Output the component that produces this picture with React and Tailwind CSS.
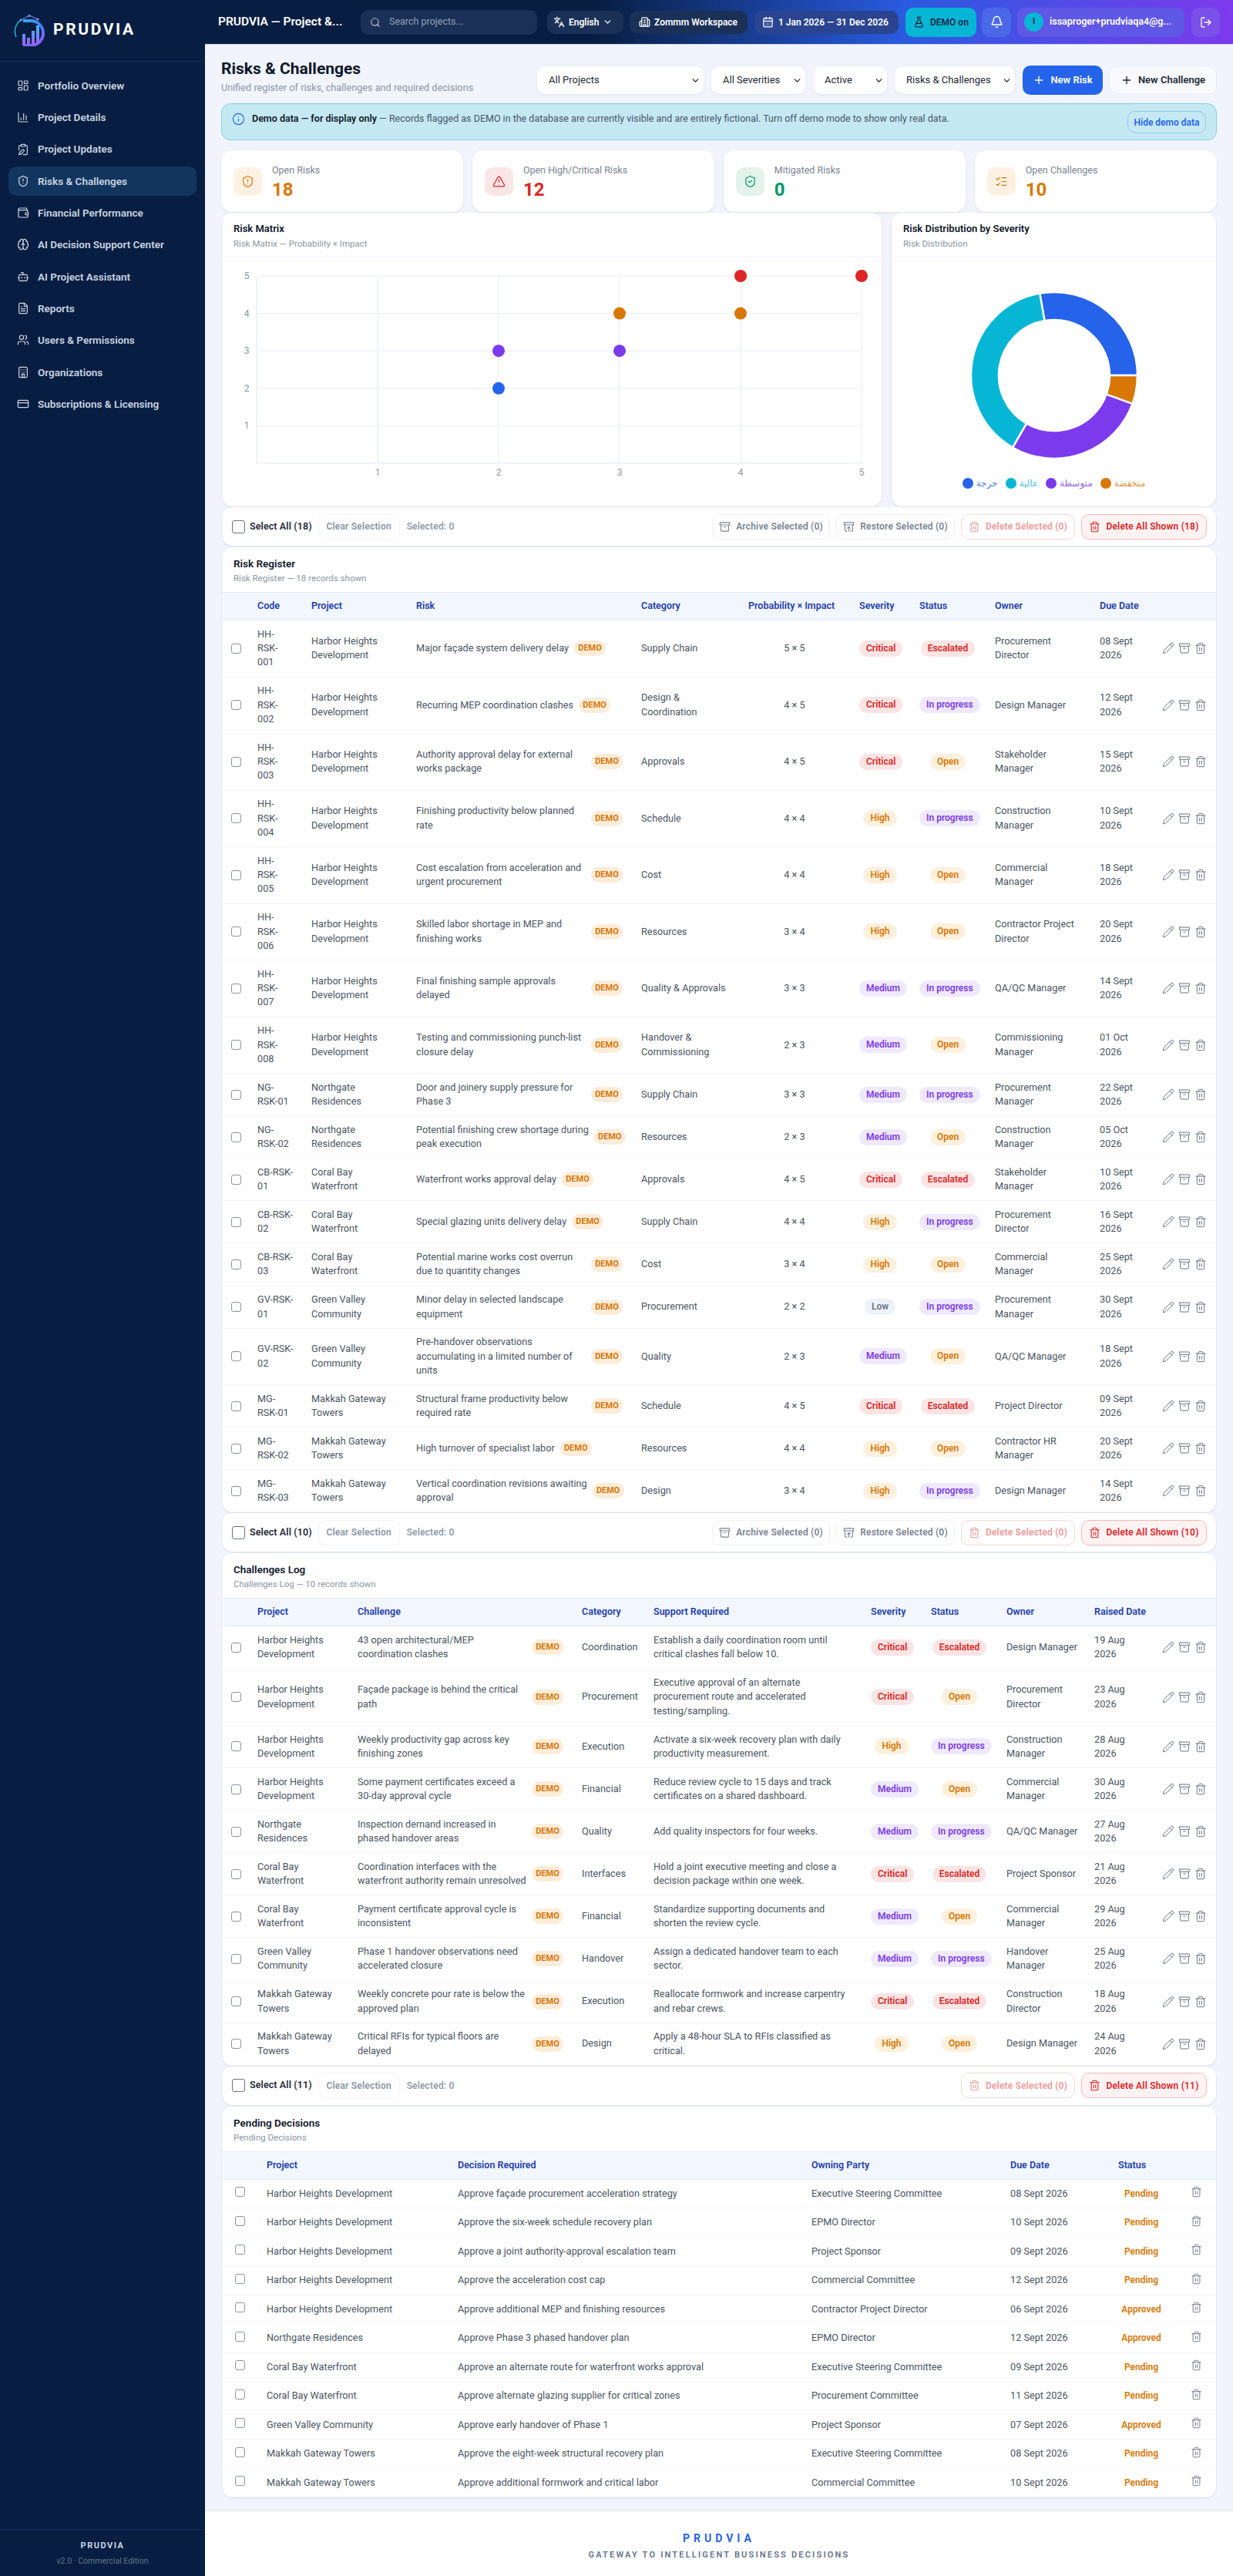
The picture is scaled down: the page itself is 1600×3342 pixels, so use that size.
import {
  Archive, ArchiveRestore, Bell, Bot, Brain, Building2, CalendarDays, ChartColumn, ChevronDown, ClipboardPen, CreditCard,
  FileText, FlaskConical, Hotel, Info, Languages, LayoutDashboard, ListChecks, LogOut, Pencil, Plus, Search, ShieldAlert,
  ShieldCheck, Trash2, TriangleAlert, Users, Wallet,
} from 'lucide-react';

const NAV = [
  ['Portfolio Overview', LayoutDashboard],
  ['Project Details', ChartColumn],
  ['Project Updates', ClipboardPen],
  ['Risks & Challenges', ShieldAlert, true],
  ['Financial Performance', Wallet],
  ['AI Decision Support Center', Brain],
  ['AI Project Assistant', Bot],
  ['Reports', FileText],
  ['Users & Permissions', Users],
  ['Organizations', Hotel],
  ['Subscriptions & Licensing', CreditCard],
];

const KPIS = [
  ['Open Risks', '18', ShieldAlert, 'bg-[#fdf1e3] text-[#d97706]', 'text-[#d97706]'],
  ['Open High/Critical Risks', '12', TriangleAlert, 'bg-[#fbe6e6] text-[#dc2626]', 'text-[#dc2626]'],
  ['Mitigated Risks', '0', ShieldCheck, 'bg-[#e3f3ec] text-[#059669]', 'text-[#059669]'],
  ['Open Challenges', '10', ListChecks, 'bg-[#fdf1e3] text-[#d97706]', 'text-[#d97706]'],
];

const HH = 'Harbor Heights\nDevelopment';
const NG = 'Northgate\nResidences';
const CB = 'Coral Bay\nWaterfront';
const GV = 'Green Valley\nCommunity';
const MG = 'Makkah Gateway\nTowers';

const RISKS = [
  ['HH-\nRSK-\n001', HH, 'Major façade system delivery delay', 'Supply Chain', '5 × 5', 'Critical', 'Escalated', 'Procurement\nDirector', '08 Sept\n2026'],
  ['HH-\nRSK-\n002', HH, 'Recurring MEP coordination clashes', 'Design &\nCoordination', '4 × 5', 'Critical', 'In progress', 'Design Manager', '12 Sept\n2026'],
  ['HH-\nRSK-\n003', HH, 'Authority approval delay for external\nworks package', 'Approvals', '4 × 5', 'Critical', 'Open', 'Stakeholder\nManager', '15 Sept\n2026'],
  ['HH-\nRSK-\n004', HH, 'Finishing productivity below planned\nrate', 'Schedule', '4 × 4', 'High', 'In progress', 'Construction\nManager', '10 Sept\n2026'],
  ['HH-\nRSK-\n005', HH, 'Cost escalation from acceleration and\nurgent procurement', 'Cost', '4 × 4', 'High', 'Open', 'Commercial\nManager', '18 Sept\n2026'],
  ['HH-\nRSK-\n006', HH, 'Skilled labor shortage in MEP and\nfinishing works', 'Resources', '3 × 4', 'High', 'Open', 'Contractor Project\nDirector', '20 Sept\n2026'],
  ['HH-\nRSK-\n007', HH, 'Final finishing sample approvals\ndelayed', 'Quality & Approvals', '3 × 3', 'Medium', 'In progress', 'QA/QC Manager', '14 Sept\n2026'],
  ['HH-\nRSK-\n008', HH, 'Testing and commissioning punch-list\nclosure delay', 'Handover &\nCommissioning', '2 × 3', 'Medium', 'Open', 'Commissioning\nManager', '01 Oct\n2026'],
  ['NG-\nRSK-01', NG, 'Door and joinery supply pressure for\nPhase 3', 'Supply Chain', '3 × 3', 'Medium', 'In progress', 'Procurement\nManager', '22 Sept\n2026'],
  ['NG-\nRSK-02', NG, 'Potential finishing crew shortage during\npeak execution', 'Resources', '2 × 3', 'Medium', 'Open', 'Construction\nManager', '05 Oct\n2026'],
  ['CB-RSK-\n01', CB, 'Waterfront works approval delay', 'Approvals', '4 × 5', 'Critical', 'Escalated', 'Stakeholder\nManager', '10 Sept\n2026'],
  ['CB-RSK-\n02', CB, 'Special glazing units delivery delay', 'Supply Chain', '4 × 4', 'High', 'In progress', 'Procurement\nDirector', '16 Sept\n2026'],
  ['CB-RSK-\n03', CB, 'Potential marine works cost overrun\ndue to quantity changes', 'Cost', '3 × 4', 'High', 'Open', 'Commercial\nManager', '25 Sept\n2026'],
  ['GV-RSK-\n01', GV, 'Minor delay in selected landscape\nequipment', 'Procurement', '2 × 2', 'Low', 'In progress', 'Procurement\nManager', '30 Sept\n2026'],
  ['GV-RSK-\n02', GV, 'Pre-handover observations\naccumulating in a limited number of\nunits', 'Quality', '2 × 3', 'Medium', 'Open', 'QA/QC Manager', '18 Sept\n2026'],
  ['MG-\nRSK-01', MG, 'Structural frame productivity below\nrequired rate', 'Schedule', '4 × 5', 'Critical', 'Escalated', 'Project Director', '09 Sept\n2026'],
  ['MG-\nRSK-02', MG, 'High turnover of specialist labor', 'Resources', '4 × 4', 'High', 'Open', 'Contractor HR\nManager', '20 Sept\n2026'],
  ['MG-\nRSK-03', MG, 'Vertical coordination revisions awaiting\napproval', 'Design', '3 × 4', 'High', 'In progress', 'Design Manager', '14 Sept\n2026'],
];

const CHALLENGES = [
  [HH, '43 open architectural/MEP\ncoordination clashes', 'Coordination', 'Establish a daily coordination room until\ncritical clashes fall below 10.', 'Critical', 'Escalated', 'Design Manager', '19 Aug\n2026'],
  [HH, 'Façade package is behind the critical\npath', 'Procurement', 'Executive approval of an alternate\nprocurement route and accelerated\ntesting/sampling.', 'Critical', 'Open', 'Procurement\nDirector', '23 Aug\n2026'],
  [HH, 'Weekly productivity gap across key\nfinishing zones', 'Execution', 'Activate a six-week recovery plan with daily\nproductivity measurement.', 'High', 'In progress', 'Construction\nManager', '28 Aug\n2026'],
  [HH, 'Some payment certificates exceed a\n30-day approval cycle', 'Financial', 'Reduce review cycle to 15 days and track\ncertificates on a shared dashboard.', 'Medium', 'Open', 'Commercial\nManager', '30 Aug\n2026'],
  [NG, 'Inspection demand increased in\nphased handover areas', 'Quality', 'Add quality inspectors for four weeks.', 'Medium', 'In progress', 'QA/QC Manager', '27 Aug\n2026'],
  [CB, 'Coordination interfaces with the\nwaterfront authority remain unresolved', 'Interfaces', 'Hold a joint executive meeting and close a\ndecision package within one week.', 'Critical', 'Escalated', 'Project Sponsor', '21 Aug\n2026'],
  [CB, 'Payment certificate approval cycle is\ninconsistent', 'Financial', 'Standardize supporting documents and\nshorten the review cycle.', 'Medium', 'Open', 'Commercial\nManager', '29 Aug\n2026'],
  [GV, 'Phase 1 handover observations need\naccelerated closure', 'Handover', 'Assign a dedicated handover team to each\nsector.', 'Medium', 'In progress', 'Handover\nManager', '25 Aug\n2026'],
  [MG, 'Weekly concrete pour rate is below the\napproved plan', 'Execution', 'Reallocate formwork and increase carpentry\nand rebar crews.', 'Critical', 'Escalated', 'Construction\nDirector', '18 Aug\n2026'],
  [MG, 'Critical RFIs for typical floors are\ndelayed', 'Design', 'Apply a 48-hour SLA to RFIs classified as\ncritical.', 'High', 'Open', 'Design Manager', '24 Aug\n2026'],
];

const DECISIONS = [
  ['Harbor Heights Development', 'Approve façade procurement acceleration strategy', 'Executive Steering Committee', '08 Sept 2026', 'Pending'],
  ['Harbor Heights Development', 'Approve the six-week schedule recovery plan', 'EPMO Director', '10 Sept 2026', 'Pending'],
  ['Harbor Heights Development', 'Approve a joint authority-approval escalation team', 'Project Sponsor', '09 Sept 2026', 'Pending'],
  ['Harbor Heights Development', 'Approve the acceleration cost cap', 'Commercial Committee', '12 Sept 2026', 'Pending'],
  ['Harbor Heights Development', 'Approve additional MEP and finishing resources', 'Contractor Project Director', '06 Sept 2026', 'Approved'],
  ['Northgate Residences', 'Approve Phase 3 phased handover plan', 'EPMO Director', '12 Sept 2026', 'Approved'],
  ['Coral Bay Waterfront', 'Approve an alternate route for waterfront works approval', 'Executive Steering Committee', '09 Sept 2026', 'Pending'],
  ['Coral Bay Waterfront', 'Approve alternate glazing supplier for critical zones', 'Procurement Committee', '11 Sept 2026', 'Pending'],
  ['Green Valley Community', 'Approve early handover of Phase 1', 'Project Sponsor', '07 Sept 2026', 'Approved'],
  ['Makkah Gateway Towers', 'Approve the eight-week structural recovery plan', 'Executive Steering Committee', '08 Sept 2026', 'Pending'],
  ['Makkah Gateway Towers', 'Approve additional formwork and critical labor', 'Commercial Committee', '10 Sept 2026', 'Pending'],
];

const BADGE = {
  Critical: 'bg-[#fbe4e4] text-[#dc2626]',
  Escalated: 'bg-[#fbe4e4] text-[#dc2626]',
  High: 'bg-[#fdf0dd] text-[#d97706]',
  Open: 'bg-[#fdf0dd] text-[#d97706]',
  Medium: 'bg-[#efe9fd] text-[#7c3aed]',
  'In progress': 'bg-[#efe9fd] text-[#7c3aed]',
  Low: 'bg-[#eef2f8] text-[#64748b]',
};

function Logo() {
  return (
    <svg width="44" height="42" viewBox="0 0 44 42" fill="none">
      <defs>
        <linearGradient id="logoRing" x1="0" y1="0" x2="44" y2="42" gradientUnits="userSpaceOnUse">
          <stop stopColor="#22d3ee" />
          <stop offset="0.55" stopColor="#3b82f6" />
          <stop offset="1" stopColor="#a855f7" />
        </linearGradient>
        <linearGradient id="logoBars" x1="0" y1="10" x2="0" y2="42" gradientUnits="userSpaceOnUse">
          <stop stopColor="#22d3ee" />
          <stop offset="1" stopColor="#a855f7" />
        </linearGradient>
      </defs>
      <path d="M12 9h10a16 16 0 0 1 0 32H12" stroke="url(#logoRing)" strokeWidth="4" />
      <path d="M9 8a18 18 0 0 0-6 22" stroke="#22d3ee" strokeWidth="1.2" />
      <path d="M9 8 20 2l11 5" stroke="#7c9cf5" strokeWidth="1" />
      <circle cx="9" cy="8" r="1.6" fill="#7c9cf5" />
      <circle cx="20" cy="2.5" r="1.6" fill="#a78bfa" />
      <circle cx="31" cy="7" r="1.6" fill="#a78bfa" />
      <rect x="11" y="26" width="4" height="15" fill="url(#logoBars)" />
      <rect x="17" y="31" width="4" height="10" fill="url(#logoBars)" />
      <rect x="23" y="22" width="4" height="19" fill="url(#logoBars)" />
      <rect x="29" y="15" width="4" height="24" fill="url(#logoBars)" />
    </svg>
  );
}

function Sidebar() {
  return (
    <aside className="w-[266px] shrink-0 bg-[#071e42] flex flex-col">
      <div className="h-[80px] flex items-center gap-[7px] pl-[18px] pb-[2px] border-b border-[#14315c]">
        <Logo />
        <span className="text-[21px] font-bold tracking-[2.6px] text-white leading-none">PRUDVIA</span>
      </div>
      <nav className="flex-1 px-[11px] pt-[12px] flex flex-col gap-[3.3px]">
        {NAV.map(([label, Icon, active]) => (
          <div key={label} className={`h-[38px] rounded-[10px] flex items-center gap-[11px] pl-[11px] text-[13.5px] font-semibold text-[#cbd5e1] ${active ? 'bg-[#12355f]' : ''}`}>
            <Icon size={16} strokeWidth={1.8} className="shrink-0" />
            {label}
          </div>
        ))}
      </nav>
      <div className="h-[61px] border-t border-[#14315c] flex flex-col items-center pt-[13px]">
        <div className="text-[11px] font-bold tracking-[1.5px] text-[#cbd5e1] leading-[16px]">PRUDVIA</div>
        <div className="text-[10.5px] text-[#64748b] leading-[16px] mt-[4px]">v2.0 · Commercial Edition</div>
      </div>
    </aside>
  );
}

function Topbar() {
  return (
    <header className="h-[58px] shrink-0 flex items-center pl-[17px] pr-[17px] bg-[linear-gradient(90deg,#071e42_38%,#2a5be0_68%,#7c3aed_100%)] border-b border-[#cbd5e1] text-white">
      <div className="w-[185px] text-[15.5px] font-semibold whitespace-nowrap">PRUDVIA — Project &amp;...</div>
      <div className="w-[229px] h-[32px] rounded-[10px] bg-[#1a3057] flex items-center gap-[11px] pl-[12px] text-[12.5px] text-[#94a3b8]">
        <Search size={14} className="text-[#b6c2d4]" />
        Search projects...
      </div>
      <div className="ml-[13px] w-[99px] h-[30px] rounded-[10px] bg-[#1a3057] flex items-center pl-[8px] gap-[5px] text-[12px] font-semibold">
        <Languages size={15} />
        English
        <ChevronDown size={13} strokeWidth={2.5} />
      </div>
      <div className="ml-[8px] w-[153px] h-[30px] rounded-[10px] bg-[#1a3057] flex items-center pl-[12px] gap-[5px] text-[12px] font-semibold whitespace-nowrap">
        <Building2 size={15} />
        Zommm Workspace
      </div>
      <div className="ml-[9px] w-[187px] h-[30px] rounded-[10px] bg-[#2a4491] flex items-center pl-[10px] gap-[6px] text-[12px] font-semibold whitespace-nowrap">
        <CalendarDays size={15} />
        1 Jan 2026 — 31 Dec 2026
      </div>
      <div className="ml-[9px] w-[92px] h-[38px] rounded-[10px] bg-[#06b6d4] flex items-center pl-[10px] gap-[7px] text-[12px] font-semibold text-[#0f2747]">
        <FlaskConical size={15} />
        DEMO on
      </div>
      <div className="ml-[7px] w-[38px] h-[38px] rounded-[10px] bg-[#4a68e8] flex items-center justify-center">
        <Bell size={17} />
      </div>
      <div className="ml-[8px] w-[217px] h-[38px] rounded-[10px] bg-[#5f57e6] flex items-center pl-[9px] gap-[8px] text-[12.5px] font-semibold whitespace-nowrap">
        <span className="w-[25px] h-[25px] rounded-full bg-[#06b6d4] text-[#0f2747] text-[11px] font-bold flex items-center justify-center">I</span>
        issaproger+prudviaqa4@g...
      </div>
      <div className="ml-[9px] w-[37px] h-[38px] rounded-[10px] bg-[#7a50e8] flex items-center justify-center">
        <LogOut size={16} />
      </div>
    </header>
  );
}

function FilterSelect({ label, width }) {
  return (
    <div className={`${width} h-[36px] rounded-[10px] bg-white shadow-[0_1px_3px_rgba(15,23,42,0.08)] flex items-center justify-between pl-[15px] pr-[4px] text-[13px] text-[#1f2937]`}>
      {label}
      <ChevronDown size={13} strokeWidth={2.5} className="text-[#1f2937]" />
    </div>
  );
}

function ChartCardHead({ title, sub }) {
  return (
    <div className="h-[58px] border-b border-[#eef1f6] px-[15px] pt-[12px]">
      <div className="text-[13px] font-semibold text-[#0f172a] leading-[18px]">{title}</div>
      <div className="text-[11.5px] text-[#8b95a3] leading-[18px] mt-px">{sub}</div>
    </div>
  );
}

const MATRIX_DOTS = [
  [4, 5, '#dc2626'], [5, 5, '#dc2626'], [3, 4, '#d97706'], [4, 4, '#d97706'], [2, 3, '#7c3aed'], [3, 3, '#7c3aed'], [2, 2, '#2563eb'],
];

function RiskMatrix() {
  const px = (v) => 45 + v * 157;
  const py = (v) => 267 - v * 48.6;
  const ticks = [1, 2, 3, 4, 5];
  return (
    <svg width="856" height="322" className="block">
      <line x1="45" x2="45" y1={py(5)} y2={py(0)} stroke="#e2e8f0" />
      <line x1="45" x2={px(5)} y1={py(0)} y2={py(0)} stroke="#e2e8f0" />
      {ticks.map((t) => (
        <g key={t}>
          <line x1="45" x2={px(5)} y1={py(t)} y2={py(t)} stroke="#e9edf3" />
          <line x1={px(t)} x2={px(t)} y1={py(5)} y2={py(0)} stroke="#e9edf3" />
          <text x={px(t)} y={py(0) + 16} textAnchor="middle" fontSize="12" fill="#8b95a3">{t}</text>
          <text x="32" y={py(t) + 4} textAnchor="middle" fontSize="12" fill="#8b95a3">{t}</text>
        </g>
      ))}
      {MATRIX_DOTS.map(([x, y, c]) => <circle key={`${x}-${y}`} cx={px(x)} cy={py(y)} r="8" fill={c} />)}
    </svg>
  );
}

function arc(from, to) {
  const c = 108;
  const pt = (r, a) => {
    const t = ((a - 90) * Math.PI) / 180;
    return `${(c + r * Math.cos(t)).toFixed(2)} ${(c + r * Math.sin(t)).toFixed(2)}`;
  };
  const large = to - from > 180 ? 1 : 0;
  return `M${pt(108, from)}A108 108 0 ${large} 1 ${pt(108, to)}L${pt(72, to)}A72 72 0 ${large} 0 ${pt(72, from)}Z`;
}

function Donut() {
  const parts = [[-10, 90, '#2563eb'], [90, 110, '#d97706'], [110, 210, '#7c3aed'], [210, 350, '#06b6d4']];
  return (
    <svg width="216" height="216" viewBox="0 0 216 216" className="block">
      {parts.map(([a, b, c]) => <path key={c} d={arc(a, b)} fill={c} stroke="#fff" strokeWidth="2.5" />)}
    </svg>
  );
}

function ToolButton({ icon: Icon, label, width, tone }) {
  const tones = {
    plain: 'border-[#eef1f6] text-[#7b8494]',
    soft: 'border-[#f8d7d7] text-[#ee9a9a]',
    danger: 'border-[#f5b8b8] bg-[#fef2f2] text-[#dc2626]',
  };
  return (
    <div className={`${width} ${tones[tone]} h-[33px] rounded-[10px] border flex items-center justify-center gap-[7px] text-[12px] font-semibold whitespace-nowrap tracking-[0.2px]`}>
      <Icon size={15} strokeWidth={1.8} />
      {label}
    </div>
  );
}

function Toolbar({ count, archive = true, className = '' }) {
  return (
    <div className={`h-[50px] bg-white rounded-[14px] shadow-[0_1px_3px_rgba(15,23,42,0.1)] flex items-center pl-[13px] pr-[12px] ${className}`}>
      <span className="w-[17px] h-[17px] rounded-[3px] border border-[#6b7280] bg-white" />
      <span className="ml-[6px] text-[12.5px] font-semibold text-[#1f2937] whitespace-nowrap tracking-[0.1px]">Select All ({count})</span>
      <span className="ml-[8px] w-[106px] h-[33px] rounded-[10px] border border-[#f1f4f8] flex items-center justify-center text-[12px] font-semibold text-[#8b95a3] tracking-[0.2px]">Clear Selection</span>
      <span className="ml-[9px] text-[12px] font-medium text-[#8b95a3] tracking-[0.2px]">Selected: 0</span>
      <div className="ml-auto flex items-center gap-[8px]">
        {archive && <ToolButton icon={Archive} label="Archive Selected (0)" width="w-[153px]" tone="plain" />}
        {archive && <ToolButton icon={ArchiveRestore} label="Restore Selected (0)" width="w-[154px]" tone="plain" />}
        <ToolButton icon={Trash2} label="Delete Selected (0)" width="w-[148px]" tone="soft" />
        <ToolButton icon={Trash2} label={`Delete All Shown (${count})`} width="w-[163px]" tone="danger" />
      </div>
    </div>
  );
}

function CardHead({ title, sub }) {
  return (
    <div className="h-[58px] px-[15px] pt-[12px]">
      <div className="text-[13.5px] font-semibold text-[#0f172a] leading-[18px]">{title}</div>
      <div className="text-[11.5px] text-[#8b95a3] leading-[18px] mt-px">{sub}</div>
    </div>
  );
}

function Th({ children, className = '' }) {
  return <th className={`h-[36px] px-[12px] text-left text-[12.5px] font-semibold text-[#1e40af] bg-[#f2f6fe] border-y border-[#e6ebf3] ${className}`}>{children}</th>;
}

function Td({ children, className = '' }) {
  return <td className={`px-[12px] py-[8.65px] text-[12.7px] leading-[18.4px] text-[#4b5563] whitespace-pre align-middle border-b border-[#f2f4f8] ${className}`}>{children}</td>;
}

function Check({ className = '' }) {
  return <span className={`block w-[13px] h-[13px] rounded-[3px] border border-[#8b95a3] bg-white ${className}`} />;
}

function Pill({ label }) {
  return <span className={`${BADGE[label]} inline-block px-[9px] rounded-full text-[12px] font-semibold leading-[21px] whitespace-nowrap`}>{label}</span>;
}

function DemoTag() {
  return <span className="inline-block w-[41px] text-center rounded-full bg-[#fdecd9] text-[#d97706] text-[11px] font-bold leading-[20px] shrink-0">DEMO</span>;
}

function Actions() {
  return (
    <div className="flex items-center justify-end gap-[5px] text-[#6b7280]">
      <Pencil size={16} strokeWidth={1.5} className="shrink-0" />
      <Archive size={16} strokeWidth={1.5} className="shrink-0" />
      <Trash2 size={16} strokeWidth={1.5} className="shrink-0" />
    </div>
  );
}

function RiskTable() {
  return (
    <table className="w-full table-fixed border-collapse">
      <colgroup>
        <col className="w-[34px]" /><col className="w-[70px]" /><col className="w-[136px]" /><col className="w-[292px]" />
        <col className="w-[139px]" /><col className="w-[144px]" /><col className="w-[78px]" /><col className="w-[98px]" />
        <col className="w-[136px]" /><col className="w-[85px]" /><col className="w-[78px]" />
      </colgroup>
      <thead>
        <tr>
          <Th /><Th>Code</Th><Th>Project</Th><Th>Risk</Th><Th>Category</Th>
          <Th className="text-center">Probability × Impact</Th><Th className="text-center">Severity</Th><Th className="text-center">Status</Th>
          <Th>Owner</Th><Th>Due Date</Th><Th />
        </tr>
      </thead>
      <tbody>
        {RISKS.map(([code, project, risk, category, score, severity, status, owner, due]) => (
          <tr key={code}>
            <Td><Check /></Td>
            <Td>{code}</Td>
            <Td>{project}</Td>
            <Td>
              <div className="flex items-center gap-[7px]">
                <span className={risk.includes('\n') ? 'w-[232px]' : ''}>{risk}</span>
                <DemoTag />
              </div>
            </Td>
            <Td>{category}</Td>
            <Td className="text-center">{score}</Td>
            <Td className="text-center"><Pill label={severity} /></Td>
            <Td className="text-center"><Pill label={status} /></Td>
            <Td>{owner}</Td>
            <Td>{due}</Td>
            <Td><Actions /></Td>
          </tr>
        ))}
      </tbody>
    </table>
  );
}

function ChallengeTable() {
  return (
    <table className="w-full table-fixed border-collapse">
      <colgroup>
        <col className="w-[34px]" /><col className="w-[130px]" /><col className="w-[291px]" /><col className="w-[93px]" />
        <col className="w-[282px]" /><col className="w-[78px]" /><col className="w-[98px]" /><col className="w-[114px]" />
        <col className="w-[92px]" /><col className="w-[78px]" />
      </colgroup>
      <thead>
        <tr>
          <Th /><Th>Project</Th><Th>Challenge</Th><Th>Category</Th><Th>Support Required</Th>
          <Th className="text-center">Severity</Th><Th className="text-center">Status</Th><Th>Owner</Th><Th>Raised Date</Th><Th />
        </tr>
      </thead>
      <tbody>
        {CHALLENGES.map(([project, challenge, category, support, severity, status, owner, raised]) => (
          <tr key={challenge}>
            <Td><Check /></Td>
            <Td>{project}</Td>
            <Td>
              <div className="flex items-center justify-between">
                <span>{challenge}</span>
                <DemoTag />
              </div>
            </Td>
            <Td>{category}</Td>
            <Td>{support}</Td>
            <Td className="text-center"><Pill label={severity} /></Td>
            <Td className="text-center"><Pill label={status} /></Td>
            <Td>{owner}</Td>
            <Td>{raised}</Td>
            <Td><Actions /></Td>
          </tr>
        ))}
      </tbody>
    </table>
  );
}

function DecisionTable() {
  return (
    <table className="w-full table-fixed border-collapse">
      <colgroup>
        <col className="w-[46px]" /><col className="w-[248px]" /><col className="w-[459px]" /><col className="w-[258px]" />
        <col className="w-[140px]" /><col className="w-[84px]" /><col className="w-[55px]" />
      </colgroup>
      <thead>
        <tr>
          <Th /><Th>Project</Th><Th>Decision Required</Th><Th>Owning Party</Th><Th>Due Date</Th><Th className="text-center">Status</Th><Th />
        </tr>
      </thead>
      <tbody>
        {DECISIONS.map(([project, decision, party, due, status]) => (
          <tr key={decision} className="h-[37.5px]">
            <Td><Check className="ml-[5px] -mt-[4px]" /></Td>
            <Td>{project}</Td>
            <Td>{decision}</Td>
            <Td>{party}</Td>
            <Td>{due}</Td>
            <Td className="text-center"><span className="text-[12px] font-semibold text-[#d97706]">{status}</span></Td>
            <Td>
              <Trash2 size={15} strokeWidth={1.5} className="ml-[10px] -mt-[4px] text-[#6b7280]" />
            </Td>
          </tr>
        ))}
      </tbody>
    </table>
  );
}

function Card({ children, className = '' }) {
  return <section className={`bg-white rounded-[14px] shadow-[0_1px_3px_rgba(15,23,42,0.1)] overflow-hidden ${className}`}>{children}</section>;
}

export default function App() {
  return (
    <div className="flex min-h-[3342px] w-[1600px] font-['Roboto','Noto_Sans',sans-serif]">
      <Sidebar />
      <div className="flex-1 min-w-0 flex flex-col">
        <Topbar />
        <main className="flex-1 bg-[#f1f4fc] px-[21px] pt-[27px] pb-[15px]">
          <div className="flex items-start justify-between h-[36px]">
            <div>
              <h1 className="text-[21px] font-bold text-[#0f172a] leading-[26px] -mt-[9px]">Risks &amp; Challenges</h1>
              <p className="text-[12.7px] text-[#8b95a3] leading-[18px] mt-[3px]">Unified register of risks, challenges and required decisions</p>
            </div>
            <div className="flex items-center gap-[10px]">
              <FilterSelect label="All Projects" width="w-[216px]" />
              <FilterSelect label="All Severities" width="w-[122px]" />
              <FilterSelect label="Active" width="w-[96px]" />
              <FilterSelect label="Risks & Challenges" width="w-[156px]" />
              <div className="w-[104px] h-[38px] rounded-[10px] bg-[#2563eb] text-white text-[13px] font-semibold flex items-center justify-center gap-[7px]">
                <Plus size={16} />New Risk
              </div>
              <div className="w-[140px] h-[36px] -ml-[2px] rounded-[10px] bg-[#f8fafd] border border-[#e9edf3] text-[#1f2937] text-[13px] font-semibold flex items-center justify-center gap-[7px]">
                <Plus size={16} />New Challenge
              </div>
            </div>
          </div>

          <div className="mt-[13px] h-[48px] rounded-[12px] bg-[#c5e9f3] border border-[#7fd3e6] flex pl-[13px] pr-[13px] pt-[9px]">
            <Info size={17} strokeWidth={1.6} className="text-[#2563eb] mt-[2px]" />
            <p className="ml-[9px] text-[12.5px] leading-[20px] text-[#475569]">
              <b className="font-semibold text-[#0f172a]">Demo data — for display only</b> — Records flagged as DEMO in the database are currently visible and are entirely fictional. Turn off demo mode to show only real data.
            </p>
            <div className="ml-auto w-[102px] h-[29px] rounded-[10px] border border-[#93c5e8] text-[#2563eb] text-[12px] font-semibold flex items-center justify-center">Hide demo data</div>
          </div>

          <div className="mt-[13px] grid grid-cols-4 gap-[11.5px]">
            {KPIS.map(([label, value, Icon, box, tone]) => (
              <Card key={label} className="h-[80px] flex items-center pl-[16px]">
                <span className={`${box} w-[37px] h-[37px] rounded-[10px] flex items-center justify-center`}>
                  <Icon size={17} strokeWidth={1.7} />
                </span>
                <div className="ml-[13px] pt-[2px]">
                  <div className="text-[12.5px] text-[#7b8494] leading-[18px]">{label}</div>
                  <div className={`${tone} text-[24px] font-bold leading-[28px] mt-[2px]`}>{value}</div>
                </div>
              </Card>
            ))}
          </div>

          <div className="mt-px flex gap-[13px] pl-px pr-px">
            <Card className="w-[856px] h-[381px]">
              <ChartCardHead title="Risk Matrix" sub="Risk Matrix — Probability × Impact" />
              <RiskMatrix />
            </Card>
            <Card className="flex-1 h-[381px]">
              <ChartCardHead title="Risk Distribution by Severity" sub="Risk Distribution" />
              <div className="flex justify-center pt-[45px] pl-[0px]">
                <Donut />
              </div>
              <div className="mt-[23px] flex justify-center items-center gap-[10px] text-[12px] font-['DejaVu_Sans',sans-serif]" dir="ltr">
                {[['حرجة', 'bg-[#2563eb]', 'text-[#2563eb]'], ['عالية', 'bg-[#06b6d4]', 'text-[#06b6d4]'], ['متوسطة', 'bg-[#7c3aed]', 'text-[#7c3aed]'], ['منخفضة', 'bg-[#d97706]', 'text-[#d97706]']].map(([label, dot, text]) => (
                  <span key={label} className="flex items-center gap-[4px]">
                    <span className={`${dot} w-[14px] h-[14px] rounded-full`} />
                    <span className={`${text} opacity-80`}>{label}</span>
                  </span>
                ))}
              </div>
            </Card>
          </div>

          <div className="mx-px flex flex-col">
            <Toolbar count={18} className="mt-px" />
            <Card className="mt-[2px]">
              <CardHead title="Risk Register" sub="Risk Register — 18 records shown" />
              <RiskTable />
            </Card>
            <Toolbar count={10} className="mt-px" />
            <Card className="mt-[2px]">
              <CardHead title="Challenges Log" sub="Challenges Log — 10 records shown" />
              <ChallengeTable />
            </Card>
            <Toolbar count={11} archive={false} className="mt-px" />
            <Card className="mt-[2px]">
              <CardHead title="Pending Decisions" sub="Pending Decisions" />
              <DecisionTable />
            </Card>
          </div>
        </main>
        <footer className="h-[86px] shrink-0 bg-white border-t-2 border-[#e8ecf4] flex flex-col items-center pt-[25px]">
          <div className="text-[14px] font-bold tracking-[5px] text-[#2563eb] leading-[20px]">PRUDVIA</div>
          <div className="mt-[4px] text-[11px] font-semibold tracking-[2.2px] text-[#64748b] leading-[16px]">GATEWAY TO INTELLIGENT BUSINESS DECISIONS</div>
        </footer>
      </div>
    </div>
  );
}
